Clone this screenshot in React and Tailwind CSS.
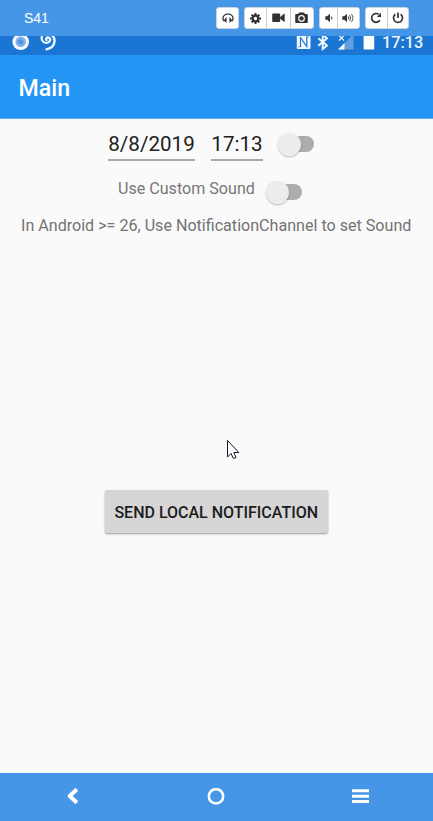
import React from "react";

const DARK = "#333333";

function Headset() {
  return (
    <svg width="12" height="12" viewBox="0 0 12 12" fill="none" stroke={DARK}>
      <path d="M3 8.500H1.500C.2 5.500 1.800 1.800 6 1.800S11.800 5.500 10.500 8.500H9" strokeWidth="1.300" />
      <path d="M4.300 5.500V10.500L2.300 8.300ZM7.700 5.500V10.500L9.700 8.300Z" fill={DARK} strokeWidth=".5" />
    </svg>
  );
}

function Gear() {
  return (
    <svg width="11" height="11" viewBox="0 0 11 11" fill="none" stroke={DARK}>
      <circle cx="5.500" cy="5.500" r="2.800" strokeWidth="2.200" />
      <path d="M5.500 0V2M5.500 9V11M0 5.500H2M9 5.500H11M1.600 1.600 3 3M8 8 9.400 9.400M9.400 1.600 8 3M3 8 1.600 9.400" strokeWidth="2" />
    </svg>
  );
}

function Video() {
  return (
    <svg width="13" height="10" viewBox="0 0 13 10" fill={DARK}>
      <rect x="0.200" y="0.500" width="8" height="8.500" rx="1" />
      <path d="M8.200 4 12 .8Q12.700.5 12.700 1.200V8.300Q12.700 9 12 8.700L8.200 5.700Z" />
    </svg>
  );
}

function Camera() {
  return (
    <svg width="13" height="12" viewBox="0 0 13 12" fill={DARK}>
      <path fillRule="evenodd" d="M1.200 2H3L4 .5H9L10 2H11.800Q12.800 2 12.800 3V10Q12.800 11 11.800 11H1.200Q.2 11 .2 10V3Q.2 2 1.200 2ZM6.500 3A3.400 3.400 0 1 0 6.500 9.800 3.400 3.400 0 1 0 6.500 3Z" />
      <circle cx="6.500" cy="6.400" r="2.200" />
    </svg>
  );
}

function Volume({ loud }) {
  return (
    <svg width={loud ? 13 : 8} height="12" viewBox={loud ? "0 0 13 12" : "0 0 8 12"} fill="none" stroke={DARK}>
      <path d="M.3 4.200H2.300L5 1.800V10.200L2.300 7.800H.3Z" fill={DARK} stroke="none" />
      <path d="M6.300 4.500Q7.700 6 6.300 7.500" strokeWidth="1" />
      {loud && <path d="M7.600 3Q10 6 7.600 9M9.300 1.800Q12.700 6 9.300 10.200" strokeWidth=".8" />}
    </svg>
  );
}

function Repeat() {
  return (
    <svg width="12" height="12" viewBox="0 0 12 12" fill="none" stroke={DARK}>
      <path d="M8.700 2.400A4.400 4.400 0 1 0 9.800 8.200" strokeWidth="1.700" />
      <path d="M11 .7V4.900H6.800Z" fill={DARK} stroke="none" />
    </svg>
  );
}

function Power() {
  return (
    <svg width="12" height="12" viewBox="0 0 12 12" fill="none" stroke={DARK} strokeWidth="1.700">
      <path d="M3.400 2.300A4.500 4.500 0 1 0 8.600 2.300" />
      <path d="M6 .4V6" />
    </svg>
  );
}

function Group({ className, children }) {
  return (
    <div className={`flex h-[22px] overflow-hidden rounded-[3px] border border-[#ccd3da] bg-white divide-x divide-[#cccccc] ${className}`}>
      {children}
    </div>
  );
}

function Tool({ children }) {
  return <button className="flex min-w-0 flex-1 items-center justify-center">{children}</button>;
}

function Toolbar() {
  return (
    <header className="flex h-9 shrink-0 items-start bg-[#4596e6] pt-[7px] pl-6">
      <span className="w-[192px] pt-[2px] font-['Liberation_Sans',sans-serif] text-[14px] leading-[18px] text-white">S41</span>
      <Group className="w-[23px]"><Tool><Headset /></Tool></Group>
      <Group className="ml-[5px] w-[70px]">
        <div className="flex w-[22px] items-center justify-center"><Gear /></div>
        <Tool><Video /></Tool>
        <Tool><Camera /></Tool>
      </Group>
      <Group className="ml-[5px] w-[41px]">
        <div className="flex w-[18px] items-center justify-center"><Volume /></div>
        <Tool><Volume loud /></Tool>
      </Group>
      <Group className="ml-[5px] w-[44px]">
        <Tool><Repeat /></Tool>
        <Tool><Power /></Tool>
      </Group>
    </header>
  );
}

function StatusBar() {
  return (
    <div className="flex h-[19px] shrink-0 items-start bg-[#1b75d2] pl-3">
      <svg className="shrink-0" width="48" height="19" viewBox="12 36 48 19" fill="none">
        <circle cx="20.700" cy="41.800" r="8.300" fill="#f8fbfd" />
        <circle cx="20.700" cy="41.800" r="5.200" fill="#80b2e6" />
        <circle cx="20.700" cy="41.800" r="2.600" fill="#5295dc" />
        <path d="M42.300 35C40.500 39.500 43 43.300 46.500 43 50.300 42.700 51.200 39 49 37.700 47.300 36.800 45.300 38.300 46.500 40" stroke="#f0f8ff" strokeWidth="2.200" strokeLinecap="round" />
        <path d="M51.500 35C56.500 38.500 55.500 47.800 46.500 49.300" stroke="#f0f8ff" strokeWidth="2.300" strokeLinecap="round" />
      </svg>
      <svg className="ml-[236px] shrink-0" width="80" height="19" viewBox="296 36 80 19" fill="none">
        <rect x="296.800" y="34.500" width="13.700" height="14.500" rx="1" fill="#f3f8fd" />
        <path d="M300.500 37V47M300.500 37.500 306.800 46.500V36.500" stroke="#1b75d2" strokeWidth="1.200" />
        <path d="M298.500 46.800H300.500M306.800 37H308.800" stroke="#1b75d2" strokeWidth=".8" />
        <path d="M318.300 38.300 327 45.500 322.700 49V35L327 38.200 318.300 45.700" stroke="#f3f8fd" strokeWidth="1.900" />
        <path d="M353.500 34V49.500H338Z" fill="#5e9fe0" />
        <path d="M344.500 43V49.500H338Z" fill="#f3f8fd" />
        <path d="M339 35.500 344 40.500M344 35.500 339 40.500" stroke="#e2effb" strokeWidth="1.300" />
        <rect x="363.600" y="35" width="10.600" height="14.500" rx=".5" fill="#fdfefe" />
      </svg>
      <span className="ml-[6px] whitespace-nowrap text-[16.300px] leading-[14px] font-medium text-[#e9f3fc]">17:13</span>
    </div>
  );
}

function Toggle({ className }) {
  return (
    <div className={`flex h-[26px] w-[37px] items-center ${className}`}>
      <div className="z-10 h-[23px] w-[23px] shrink-0 rounded-full bg-[#ececec] shadow-[0_1px_2px_#00000040]" />
      <div className="-ml-[12px] h-4 w-[25px] rounded-full bg-[#acacae]" />
    </div>
  );
}

export default function App() {
  return (
    <div className="flex h-[821px] w-[433px] flex-col overflow-hidden bg-[#fafafa] font-[Roboto,sans-serif]">
      <Toolbar />
      <StatusBar />
      <div className="flex h-16 shrink-0 items-center border-b border-[#63b1f5] bg-[#2395f5] pl-[18.500px] pt-[4px] text-[23.200px] font-medium text-white">Main</div>
      <main className="flex min-h-0 flex-1 flex-col">
        <div className="flex h-[42px] items-start pl-[108px] pt-[12px]">
          <div className="h-[30px] w-[87px] whitespace-nowrap border-b-2 border-[#a9a9a9] text-center text-[20.600px] leading-[27px] text-[#202020]">8/8/2019</div>
          <div className="ml-4 h-[30px] w-[52px] whitespace-nowrap border-b-2 border-[#a9a9a9] text-center text-[20.600px] leading-[27px] text-[#202020]">17:13</div>
          <Toggle className="ml-[14.500px]" />
        </div>
        <div className="flex h-[52px] items-start pl-[118px] pt-[18px]">
          <span className="w-[137px] whitespace-nowrap text-[16.100px] leading-5 text-[#777777]">Use Custom Sound</span>
          <Toggle className="ml-[11px]" />
        </div>
        <p className="h-[28px] whitespace-nowrap pl-[21px] pt-[3px] text-[16.100px] leading-5 text-[#737373]">In Android &gt;= 26, Use NotificationChannel to set Sound</p>
        <svg className="mt-[198px] ml-[226px] shrink-0" width="14" height="22" viewBox="226 439 14 22">
          <path d="M227.500 440.500V457L231 453.500 233.500 458.500 236 457.500 233.800 452.500H238.800Z" fill="#fff" stroke="#171724" strokeWidth="1" />
        </svg>
        <button className="ml-[105px] mt-[29px] h-[43px] w-[222.500px] whitespace-nowrap rounded-[2px] bg-[#d6d6d6] pt-[2px] text-[16px] font-medium text-[#1c1c1c] shadow-[0_1px_2px_#00000060]">SEND LOCAL NOTIFICATION</button>
      </main>
      <nav className="flex h-12 shrink-0 items-center bg-[#4596e6] pl-[66px]">
        <svg width="13" height="18" viewBox="0 0 13 18" fill="none" stroke="white" strokeWidth="4" strokeLinejoin="round"><path d="M10.900 1.300 3.700 8 10.900 14.700" /></svg>
        <svg className="ml-[128px]" width="18" height="18" viewBox="0 0 18 18" fill="none" stroke="white" strokeWidth="2.600"><circle cx="9" cy="8.300" r="7.200" /></svg>
        <svg className="ml-[126px]" width="19" height="18" viewBox="0 0 19 18" stroke="white" strokeWidth="3"><path d="M1 2.800H18M1 8.200H18M1 13.500H18" /></svg>
      </nav>
    </div>
  );
}
